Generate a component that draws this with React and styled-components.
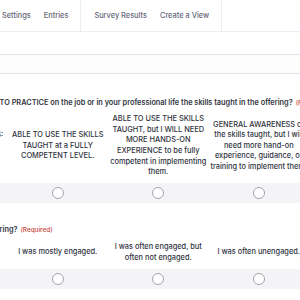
import React from "react";
import styled, { createGlobalStyle } from "styled-components";

const Global = createGlobalStyle`
  html, body { margin: 0; padding: 0; background: #ffffff; }
  body { font-family: Inter, "Noto Sans", "Liberation Sans", sans-serif; overflow: hidden; width: 300px; height: 300px; }
`;

const Page = styled.div`
  width: 300px;
  height: 300px;
  overflow: hidden;
  background: #fff;
`;

const TabBar = styled.div`
  display: flex;
  height: 31px;
  border-bottom: 1px solid #ececf1;
`;

const TabGroup = styled.div`
  display: flex;
  align-items: center;
  gap: 13px;
  padding: 0 ${(p) => p.$right}px 0 ${(p) => p.$left}px;
  border-right: 1px solid #ececf1;
`;

const Tab = styled.span`
  font-size: 7.4px;
  font-weight: 500;
  color: #66667a;
  white-space: nowrap;
`;

const FilterStrip = styled.div`
  height: 22px;
  border-bottom: 1px solid #e4e4ea;
`;

const SearchBand = styled.div`
  height: 18px;
  background: #fdfdfe;
  border-bottom: 1px solid #e4e4ea;
`;

const Content = styled.div`
  margin-left: -93px;
  width: 420px;
`;

const Question = styled.div`
  white-space: nowrap;
  font-size: 7.35px;
  font-weight: 600;
  color: #2f3441;
  line-height: 12px;
  margin: ${(p) => p.$top}px 0 0 ${(p) => p.$indent}px;
`;

const Required = styled.span`
  color: #c5483b;
  font-size: 6.4px;
  font-weight: 500;
  margin-left: 3px;
`;

const Grid = styled.div`
  display: grid;
  grid-template-columns: repeat(4, 100.5px);
`;

const LabelCell = styled.div`
  display: flex;
  align-items: center;
  justify-content: center;
  text-align: center;
  white-space: pre-line;
  padding: 0;
  height: ${(p) => p.$h}px;
  font-size: 7.4px;
  font-weight: 500;
  line-height: 10.6px;
  color: #2f3441;
`;

const RadioRow = styled.div`
  display: grid;
  grid-template-columns: repeat(4, 100.5px);
  background: #f4f4f7;
  height: 20px;
  align-items: center;
  justify-items: center;
`;

const Radio = styled.span`
  width: 10px;
  height: 10px;
  border: 1px solid #a3a3ad;
  border-radius: 50%;
  background: #fff;
  box-sizing: content-box;
`;

const cols1 = [
  "ABLE TO TEACH OTHERS:\nthe skills\ntaught.",
  "ABLE TO USE THE SKILLS TAUGHT at a FULLY COMPETENT LEVEL.",
  "ABLE TO USE THE SKILLS TAUGHT, but I WILL NEED MORE HANDS-ON EXPERIENCE to be fully competent in implementing them.",
  "GENERAL AWARENESS of the skills taught, but I will need more hand-on experience, guidance, or training to implement them.",
];

const cols2 = [
  "I was fully engaged.",
  "I was mostly engaged.",
  "I was often engaged, but often not engaged.",
  "I was often unengaged.",
];

export default function App() {
  return (
    <Page>
      <Global />
      <TabBar>
        <TabGroup $left={2} $right={12}>
          <Tab>Settings</Tab>
          <Tab>Entries</Tab>
        </TabGroup>
        <TabGroup $left={13} $right={12}>
          <Tab>Survey Results</Tab>
          <Tab>Create a View</Tab>
        </TabGroup>
      </TabBar>
      <FilterStrip />
      <SearchBand />
      <Content>
        <Question $top={23} $indent={-13}>
          To what degree are you ABLE TO PRACTICE on the job or in your professional life the skills taught in the offering?
          <Required>(Required)</Required>
        </Question>
        <Grid>
          {cols1.map((t, i) => (
            <LabelCell key={i} $h={74}>{t}</LabelCell>
          ))}
        </Grid>
        <RadioRow>
          {cols1.map((_, i) => (
            <Radio key={i} />
          ))}
        </RadioRow>
        <Question $top={21} $indent={-45}>
          How engaged were you during the offering?
          <Required>(Required)</Required>
        </Question>
        <Grid>
          {cols2.map((t, i) => (
            <LabelCell key={i} $h={33}>{t}</LabelCell>
          ))}
        </Grid>
        <RadioRow>
          {cols2.map((_, i) => (
            <Radio key={i} />
          ))}
        </RadioRow>
      </Content>
    </Page>
  );
}
